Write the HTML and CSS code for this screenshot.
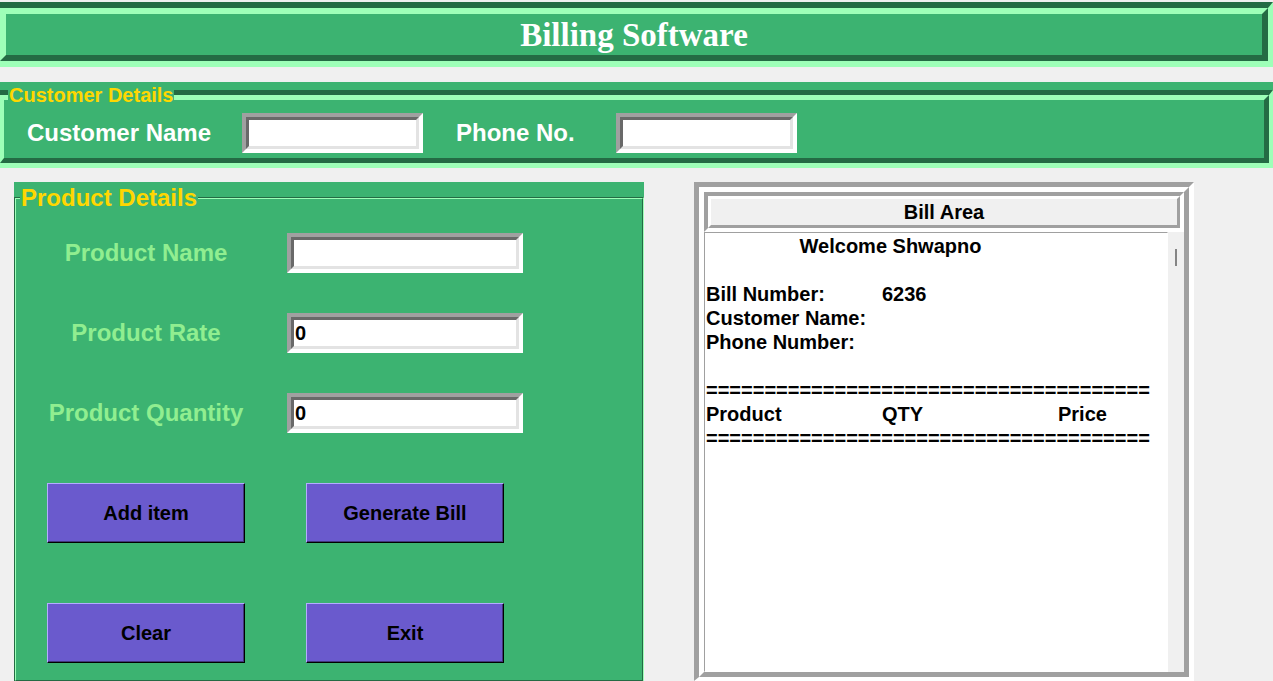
FILE: index.html
```html
<!DOCTYPE html>
<html lang="en">
<head>
<meta charset="utf-8">
<title>Billing Software</title>
<link rel="stylesheet" href="styles.css">
</head>
<body>
<header class="banner">
  <div class="banner-inner"><h1 class="banner-title">Billing Software</h1></div>
</header>

<section class="customer">
  <h2 class="legend customer-legend">Customer Details</h2>
  <div class="customer-outer">
    <form class="customer-inner">
      <label class="customer-label" for="cname">Customer Name</label>
      <span class="entry"><input class="entry-input" id="cname" type="text"></span>
      <label class="customer-label" for="phone">Phone No.</label>
      <span class="entry"><input class="entry-input" id="phone" type="text"></span>
    </form>
  </div>
</section>

<main class="main">
  <section class="product">
    <h2 class="legend product-legend">Product Details</h2>
    <div class="product-outer">
      <form class="product-inner">
        <div class="fields">
          <label class="field-label" for="pname">Product Name</label>
          <span class="entry wide"><input class="entry-input" id="pname" type="text"></span>
          <label class="field-label" for="rate">Product Rate</label>
          <span class="entry wide"><input class="entry-input" id="rate" type="text" value="0"></span>
          <label class="field-label" for="qty">Product Quantity</label>
          <span class="entry wide"><input class="entry-input" id="qty" type="text" value="0"></span>
        </div>
        <div class="actions">
          <button class="button" type="button">Add item</button>
          <button class="button" type="button">Generate Bill</button>
          <button class="button" type="button">Clear</button>
          <button class="button" type="button">Exit</button>
        </div>
      </form>
    </div>
  </section>

  <section class="bill">
    <div class="bill-inner">
      <div class="bill-head"><h2 class="bill-title">Bill Area</h2></div>
      <div class="bill-body">
        <textarea class="bill-text" aria-label="Bill Area" wrap="off">&#9; Welcome Shwapno

Bill Number:&#9;6236
Customer Name:
Phone Number:

======================================
Product&#9;&#9;QTY&#9;&#9;Price
======================================</textarea>
        <div class="scrollbar"><div class="thumb"></div></div>
      </div>
    </div>
  </section>
</main>
</body>
</html>
```
FILE: styles.css
```css
:root {
  --green: #3cb371;
  --green-dark: #246b44;
  --green-light: #9effb8;
  --gray: #a0a0a0;
  --face: #f0f0f0;
}

* { box-sizing: border-box; }

body {
  margin: 0;
  padding-top: 2px;
  height: 100vh;
  display: flex;
  flex-direction: column;
  overflow: hidden;
  background: var(--face);
  font: bold 20px/24px "Liberation Sans", Arial, sans-serif;
  color: #000;
}

h1, h2 { margin: 0; }

/* Title banner: two nested bevels form the groove */
.banner {
  margin-bottom: 15px;
  background: var(--green);
  border: solid;
  border-width: 6px 5px 6px 0;
  border-color: var(--green-dark) var(--green-light) var(--green-light) var(--green-dark);
}
.banner-inner {
  border: 6px solid;
  border-color: var(--green-light) var(--green-dark) var(--green-dark) var(--green-light);
}
.banner-title {
  padding-top: 1px;
  font: bold 33px/40px "Liberation Serif", "Times New Roman", serif;
  text-align: center;
  color: #fff;
}

.legend {
  position: absolute;
  background: var(--green);
  color: #ffd700;
  white-space: nowrap;
}

/* Customer details */
.customer {
  position: relative;
  margin-bottom: 14px;
  background: var(--green);
  padding-top: 8px;
}
.customer-legend {
  top: 1px;
  left: 8px;
  padding: 0 0 0 1px;
  font-size: 20px;
  line-height: 24px;
}
.customer-outer {
  border: solid;
  border-width: 5px 4px 5px 0;
  border-color: var(--green-dark) var(--green-light) var(--green-light) var(--green-dark);
}
.customer-inner {
  border: solid;
  border-width: 5px 5px 5px 4px;
  border-color: var(--green-light) var(--green-dark) var(--green-dark) var(--green-light);
  padding: 13px 0 5px 23px;
  display: grid;
  grid-template-columns: 182px 181px 127px 181px;
  column-gap: 33px;
  align-items: center;
}
.customer-label {
  font-size: 24px;
  color: #fff;
  white-space: nowrap;
}

/* Sunken text boxes */
.entry {
  display: flex;
  height: 40px;
  border: 4px solid;
  border-color: var(--gray) #fff #fff var(--gray);
}
.entry-input {
  flex: 1;
  min-width: 0;
  border: 3px solid;
  border-color: #696969 #e3e3e3 #e3e3e3 #696969;
  border-radius: 0;
  padding: 0 1px;
  outline: 0;
  background: #fff;
  color: #000;
  font: inherit;
}
.wide { width: 236px; }

/* Lower area */
.main {
  flex: 1;
  min-height: 0;
  display: grid;
  grid-template-columns: 630fr 500fr;
  column-gap: 50px;
  padding: 0 79px 0 14px;
}

.product {
  position: relative;
  display: flex;
  flex-direction: column;
  min-height: 0;
  background: var(--green);
  padding-top: 15px;
}
.product-legend {
  top: 2px;
  left: 6px;
  padding: 0 1px;
  font-size: 24px;
  line-height: 28px;
}
.product-outer {
  flex: 1;
  display: flex;
  border: solid;
  border-width: 1px 1px 0 1px;
  border-color: var(--green-dark) var(--green-light) var(--green-light) var(--green-dark);
}
.product-inner {
  flex: 1;
  border: 1px solid;
  border-color: var(--green-light) var(--green-dark) var(--green-dark) var(--green-light);
  padding: 34px 0 17px 1px;
}
.fields,
.actions {
  display: grid;
  grid-template-columns: 258px 258px;
  column-gap: 1px;
  justify-items: center;
  align-items: center;
}
.fields { row-gap: 40px; }
.actions {
  row-gap: 60px;
  margin-top: 50px;
}
.field-label {
  font-size: 24px;
  color: #90ee90;
}
.button {
  width: 198px;
  height: 60px;
  padding: 0;
  border: 1px solid;
  border-color: #b4acff #000 #000 #b4acff;
  border-radius: 0;
  box-shadow: inset -1px -1px #40367b;
  background: #6a5acd;
  color: #000;
  font: inherit;
}

/* Bill panel */
.bill {
  display: flex;
  min-height: 0;
  border: solid;
  border-width: 5px 5px 4px 5px;
  border-color: var(--gray) #fff #fff var(--gray);
}
.bill-inner {
  flex: 1;
  min-width: 0;
  display: flex;
  flex-direction: column;
  border: 5px solid;
  border-color: #fff var(--gray) var(--gray) #fff;
}
.bill-head {
  border: 4px solid;
  border-color: var(--gray) #fff #fff var(--gray);
}
.bill-title {
  border: 3px solid;
  border-color: #fff var(--gray) var(--gray) #fff;
  font-size: 20px;
  line-height: 26px;
  text-align: center;
}
.bill-body {
  flex: 1;
  min-height: 0;
  display: flex;
}
.bill-text {
  flex: 1;
  min-width: 0;
  margin: 0;
  border: 1px solid;
  border-color: var(--gray) #fff #fff var(--gray);
  border-radius: 0;
  padding: 1px;
  outline: 0;
  resize: none;
  overflow: hidden;
  white-space: pre;
  tab-size: 88px;
  background: #fff;
  color: #000;
  font: inherit;
}
.scrollbar {
  width: 16px;
  padding: 17px 7px;
  background: var(--face);
}
.thumb {
  height: 17px;
  background: #858585;
}
```
